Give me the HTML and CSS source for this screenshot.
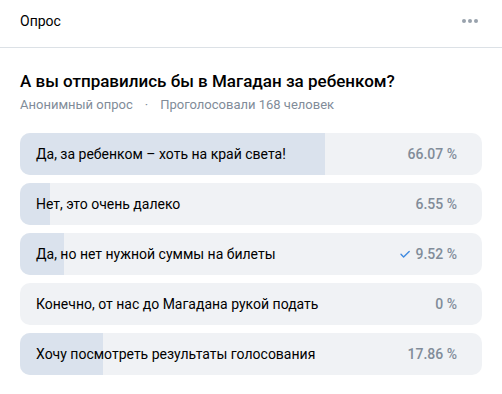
FILE: index.html
```html
<!DOCTYPE html>
<html lang="ru">
<head>
    <meta charset="UTF-8">
    <title>Опрос</title>
    <link rel="stylesheet" href="styles.css">
</head>
<body>
    <div class="poll">
        <div class="poll-header">
            <span class="poll-header-title">Опрос</span>
            <span class="more">
                <i></i><i></i><i></i>
            </span>
        </div>

        <div class="poll-body">
            <h1 class="question">А вы отправились бы в Магадан за ребенком?</h1>
            <div class="meta">
                <span>Анонимный опрос</span>
                <span class="dot">·</span>
                <span>Проголосовали 168 человек</span>
            </div>

            <div class="answers">
                <div class="answer">
                    <div class="fill" style="width: 66.07%"></div>
                    <span class="answer-text">Да, за ребенком – хоть на край света!</span>
                    <span class="percent">66.07 %</span>
                </div>
                <div class="answer">
                    <div class="fill" style="width: 6.55%"></div>
                    <span class="answer-text">Нет, это очень далеко</span>
                    <span class="percent">6.55 %</span>
                </div>
                <div class="answer">
                    <div class="fill" style="width: 9.52%"></div>
                    <span class="answer-text">Да, но нет нужной суммы на билеты</span>
                    <span class="percent">
                        <svg class="check" width="12" height="12" viewBox="0 0 12 12">
                            <path d="M2 6.3l2.6 2.6L10.2 3.4" fill="none" stroke="#3f8ae0" stroke-width="1.4" stroke-linecap="round" stroke-linejoin="round"/>
                        </svg>
                        9.52 %
                    </span>
                </div>
                <div class="answer">
                    <div class="fill" style="width: 0%"></div>
                    <span class="answer-text">Конечно, от нас до Магадана рукой подать</span>
                    <span class="percent">0 %</span>
                </div>
                <div class="answer">
                    <div class="fill" style="width: 17.86%"></div>
                    <span class="answer-text">Хочу посмотреть результаты голосования</span>
                    <span class="percent">17.86 %</span>
                </div>
            </div>
        </div>
    </div>
</body>
</html>
```

FILE: styles.css
```css
* {
    margin: 0;
    padding: 0;
    box-sizing: border-box;
}

body {
    font-family: Roboto, 'Liberation Sans', Arial, sans-serif;
    background: #fff;
    color: #000;
}

.poll {
    width: 502px;
}

.poll-header {
    height: 48px;
    display: flex;
    align-items: center;
    justify-content: space-between;
    padding: 0 24px 6px 20px;
    border-bottom: 1px solid #dce1e6;
    font-size: 14px;
}

.more {
    display: flex;
    gap: 2px;
}

.more i {
    width: 4px;
    height: 4px;
    border-radius: 50%;
    background: #99a2ad;
}

.poll-body {
    padding: 22px 20px 0;
}

.question {
    font-size: 17px;
    font-weight: 500;
    line-height: 22px;
}

.meta {
    display: flex;
    gap: 8px;
    margin-top: 3px;
    font-size: 13px;
    line-height: 20px;
    color: #818c99;
}

.meta .dot {
    margin: 0 4px;
}

.answers {
    display: flex;
    flex-direction: column;
    gap: 8px;
    margin-top: 18px;
}

.answer {
    position: relative;
    height: 42px;
    display: flex;
    align-items: center;
    justify-content: space-between;
    padding: 0 25px 0 16px;
    background: #f0f2f5;
    border-radius: 10px;
    overflow: hidden;
    font-size: 14px;
}

.fill {
    position: absolute;
    left: 0;
    top: 0;
    bottom: 0;
    background: #dae2ed;
}

.answer-text,
.percent {
    position: relative;
}

.percent {
    display: flex;
    align-items: center;
    gap: 4px;
    color: #818c99;
    font-weight: 500;
    font-size: 14px;
}
```
